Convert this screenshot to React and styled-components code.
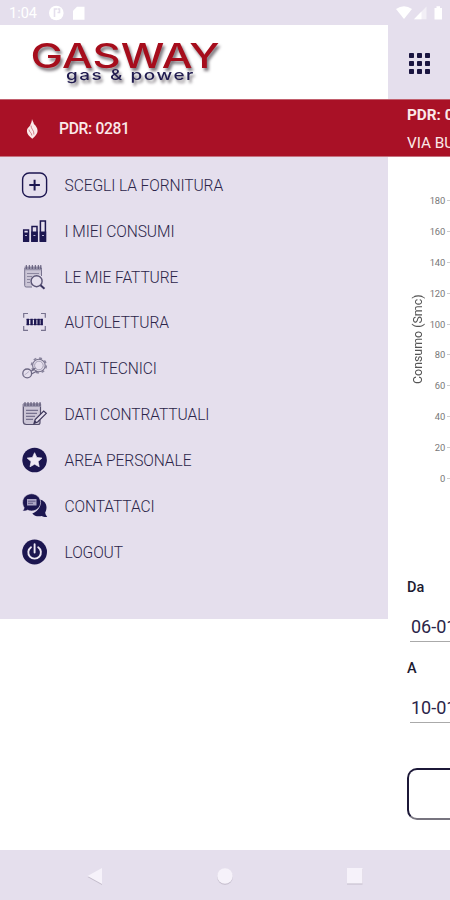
import React from 'react';
import styled, { createGlobalStyle } from 'styled-components';

const GlobalStyle = createGlobalStyle`
    :root {
        --main-red: #a91126;
        --main-lilac: #e5dfed;
        --main-navy: #1c1650;
    }

    * {
        box-sizing: border-box;
    }

    body {
        margin: 0;
        background-color: #fff;
        font-family: Roboto, "Liberation Sans", sans-serif;
    }
`;

const Screen = styled.div`
    display: flex;
    flex-direction: column;
    width: 450px;
    height: 900px;
    overflow: hidden;
    background-color: #fff;
`;

const StatusBar = styled.header`
    display: flex;
    justify-content: space-between;
    flex: 0 0 25px;
    background-color: var(--main-lilac);
    color: #fff;
`;

const StatusLeft = styled.div`
    display: flex;
    align-items: center;
    padding: 2px 0 0 9px;
    font-size: 14.5px;

    span {
        width: 39px;
    }
`;

const Body = styled.main`
    display: flex;
    flex: 1;
    min-height: 0;
`;

const Drawer = styled.aside`
    flex: 0 0 388px;
`;

const LogoBar = styled.div`
    height: 74px;
    background-color: #fff;

    svg {
        display: block;
        filter: drop-shadow(2px 3px 1.5px rgba(40, 30, 40, 0.6));
    }
`;

const RedStrip = styled.div`
    display: flex;
    align-items: center;
    height: 58px;
    padding: 1px 0 0 24px;
    background-color: var(--main-red);
    border-top: 1px solid #c2606e;
    border-bottom: 1px solid #c5727f;
    color: #fbe9e9;
    font-size: 15.6px;
    font-weight: 500;
    letter-spacing: -0.3px;

    svg {
        margin-right: 18px;
    }
`;

const Menu = styled.nav`
    height: 462px;
    padding-top: 5px;
    background-color: var(--main-lilac);
`;

const MenuItem = styled.div`
    display: flex;
    align-items: center;
    height: 45.85px;
    padding-left: 20px;
    color: #2b2549;
    font-size: 15.6px;
    font-weight: 300;

    svg {
        flex: none;
        margin-right: 16.5px;
    }

    span {
        padding-top: 2px;
        letter-spacing: -0.1px;
        white-space: nowrap;
    }
`;

const Page = styled.section`
    flex: 1;
    min-width: 0;
    overflow: hidden;
    white-space: nowrap;
`;

const PageHeader = styled.div`
    height: 74px;
    padding: 27px 0 0 20px;
    background-color: var(--main-lilac);
`;

const PageStrip = styled.div`
    height: 58px;
    padding: 2px 0 0 19px;
    background-color: var(--main-red);
    border-top: 1px solid #c2606e;
    border-bottom: 1px solid #c5727f;
    color: #fbe9e9;
    font-size: 15.3px;
    line-height: 27.5px;

    p {
        margin: 0;
    }

    p:first-child {
        font-weight: 700;
    }
`;

const Chart = styled.div`
    display: flex;
    height: 421px;
    padding-top: 28px;
`;

const AxisTitle = styled.div`
    width: 16px;
    height: 309px;
    margin-left: 22px;
    color: #555;
    font-size: 12.4px;
    line-height: 16px;
    text-align: center;
    writing-mode: vertical-rl;
    transform: rotate(180deg);
`;

const Ticks = styled.div`
    width: 24px;
`;

const Tick = styled.div`
    display: flex;
    align-items: center;
    justify-content: flex-end;
    height: 30.9px;
    color: #777;
    font-size: 9.4px;
    letter-spacing: -0.2px;

    &::after {
        content: "";
        width: 3px;
        height: 1px;
        margin-left: 2px;
        background-color: #ccc;
    }
`;

const Field = styled.div`
    height: 81px;
    padding-left: 19px;
`;

const FieldLabel = styled.div`
    height: 20px;
    color: #1d1a30;
    font-size: 14.5px;
    font-weight: 500;
    line-height: 20px;
`;

const FieldValue = styled.div`
    height: 34px;
    margin: 10px 0 0 3px;
    padding: 6px 0 0 1px;
    border-bottom: 1px solid #aaa;
    color: #2b2549;
    font-size: 18px;
    line-height: 26px;
`;

const OutlineButton = styled.button`
    display: block;
    width: 300px;
    height: 52px;
    margin: 28px 0 0 18.5px;
    background-color: #fff;
    border: 2px solid #1c1838;
    border-bottom-color: #77747f;
    border-radius: 10px;
`;

const NavBar = styled.footer`
    display: grid;
    grid-template-columns: repeat(3, 130px);
    justify-content: center;
    justify-items: center;
    align-items: center;
    flex: 0 0 50px;
    padding-top: 1px;
    background-color: var(--main-lilac);

    svg {
        filter: drop-shadow(0 1px 0.5px rgba(90, 80, 100, 0.25));
    }
`;

const Icon = ({ children, size = 28 }) => (
    <svg width={size} height={size} viewBox="0 0 28 28" fill="none" stroke="#1c1650">
        {children}
    </svg>
);

const PlusIcon = () => (
    <Icon>
        <rect x="2.6" y="2" width="24" height="24" rx="6.5" strokeWidth="1.4" />
        <path d="M14.6 8.8v10.6M9.3 14.1h10.6" strokeWidth="2" />
    </Icon>
);

const BarsIcon = () => (
    <Icon>
        <path d="M3.7 13h4.8v11H3.7zM12 9.5h5v14.5h-5zM20.4 4h5v20h-5z" strokeWidth="1.5" />
        <path d="M3 15.5h6V25H3zM11.2 14.5h6.5V25h-6.5zM19.7 14.5h6.5V25h-6.5z" fill="#1c1650" stroke="none" />
        <path d="M5 18.5h2M13.4 18.5h2M22 18.5h2" stroke="#b7b0cf" />
    </Icon>
);

const InvoiceIcon = () => (
    <Icon>
        <path d="M4.5 5v17.5q0 1.500 1.500 1.500H12V13L21.500 12V5z" fill="#cbc5d6" stroke="none" />
        <path d="M4.700 5v17.5q0 1.500 1.500 1.500H12M21.500 5v8" stroke="#77728e" />
        <path d="M4.500 3.500h17v3.800h-17z" fill="#9893ab" stroke="none" />
        <path d="M6.300 2v4M9.300 2v4M12.300 2v4M15.300 2v4M18.300 2v4M20.800 2v4" stroke="#5c5675" />
        <path d="M7 10.500h12M7 13.500h5M7 16.500h3M7 19.500h3" stroke="#8c87a0" />
        <circle cx="16.600" cy="18.200" r="5.500" fill="#e5dfed" stroke="#5b5576" strokeWidth="1.400" />
        <path d="M20.500 22.200l4 3.600" stroke="#3b3560" strokeWidth="2" />
    </Icon>
);

const ScanIcon = () => (
    <Icon>
        <path d="M8 5.5H3.7v4.3M21 5.5h4.3v4.3M8 22.3H3.7V18M21 22.3h4.3V18" stroke="#77728e" strokeWidth="1.2" />
        <path d="M7.8 10.8v6.5M11.6 10.8v6.5M15.2 10.8v6.5M18.6 10.8v6.5M21.7 10.8v6.5" strokeWidth="2.4" />
        <path d="M6.5 11.5h16M6.5 16.5h16" strokeWidth="0.6" />
    </Icon>
);

const GearIcon = () => (
    <Icon>
        <circle cx="18.900" cy="11.500" r="7.400" stroke="#8a859d" strokeWidth="1.600" strokeDasharray="2.900 2.920" />
        <circle cx="18.900" cy="11.500" r="6.300" stroke="#77728c" strokeWidth="1.100" />
        <circle cx="18.900" cy="11.500" r="4.300" stroke="#9d98ae" strokeWidth="0.900" />
        <path d="M11 17.200l4.500-3.200M11.500 20l5.500-3" stroke="#6d6884" strokeWidth="1.200" />
        <circle cx="7.200" cy="19.400" r="4.400" fill="#e5dfed" stroke="#6d6884" strokeWidth="1.300" />
        <path d="M4.500 21l4.500-3.500" stroke="#aaa5bd" strokeWidth="0.800" />
    </Icon>
);

const ContractIcon = () => (
    <Icon>
        <path d="M3.3 4v17.5q0 3 3 3H18q2 0 2-2V20L20.500 14V4z" fill="#cbc5d6" stroke="none" />
        <path d="M3.3 4v17.5q0 3 3 3H18q2 0 2-2V20M20.5 4v10" stroke="#56506e" strokeWidth="1.2" />
        <path d="M3 3.2h18v3.6H3z" fill="#918ca5" stroke="none" />
        <path d="M5 2v4M8 2v4M11 2v4M14 2v4M17 2v4M20 2v4" stroke="#56506e" />
        <path d="M6 10.3h12M6 13.3h11M6 16.3h9M6 19.3h7" stroke="#777290" strokeWidth="1.2" />
        <path d="M14 23.5l1.2-4 8.5-8.5 2.6 2.3-8.7 8.7z" fill="#e5dfed" stroke="#3c365a" strokeWidth="1.2" />
        <path d="M14 23.5l1-3 2 1.8z" fill="#3c365a" stroke="none" />
    </Icon>
);

const StarIcon = () => (
    <Icon>
        <circle cx="14.6" cy="14" r="12.3" fill="#1c1650" stroke="none" />
        <path
            d="M14.6 6.7l2.2 4.8 5.2.6-3.9 3.5 1.1 5.2-4.6-2.6-4.6 2.6 1.1-5.2-3.9-3.5 5.2-.6z"
            fill="#eee9f4"
            stroke="#eee9f4"
            strokeWidth="0.7"
            strokeLinejoin="round"
        />
    </Icon>
);

const ChatIcon = () => (
    <Icon>
        <path d="M20 7.500c4 1 6.500 4 6.500 7.800 0 2.500-.8 4-1.300 5.300.2 2 1 3 2 4.300-2 .4-4 0-5.300-1-4 1.200-7.500 0-9.600-2.500C18 19.800 21.500 14 20 7.500z" fill="#1c1650" stroke="none" />
        <path
            d="M11.600 1.800c5 0 9 3.800 9 8.600s-4 8.600-9 8.600c-1.500 0-2.800-.3-4-.9-1.300.9-3 1.200-5 .8 1-1 1.500-2 1.500-3.500-1-1.400-1.500-3.200-1.500-5 0-4.800 4-8.600 9-8.600z"
            fill="#1c1650"
            stroke="#e5dfed"
            strokeWidth="0.6"
        />
        <path d="M7 7h9.500v6.500H7z" fill="#aaa4c4" stroke="none" />
        <path d="M8 9.200h7.500M8 11.300h5" stroke="#4b4475" strokeWidth="0.8" />
    </Icon>
);

const PowerIcon = () => (
    <Icon>
        <circle cx="14.6" cy="14" r="12.4" fill="#1c1650" stroke="none" />
        <path d="M11 9.200a6.300 6.300 0 1 0 7.200 0M14.6 6.300v8.200" stroke="#eee9f4" strokeWidth="1.9" strokeLinecap="round" />
    </Icon>
);

const Logo = () => (
    <svg width="388" height="74" viewBox="0 25 388 74" fontFamily="Inter, sans-serif">
        <text x="30.500" y="67.500" fill="#a60d1c" fontSize="33.500" fontWeight="500" textLength="189" lengthAdjust="spacingAndGlyphs">
            GASWAY
        </text>
        <text x="66" y="80" fill="#211c50" fontSize="14.500" fontWeight="500" letterSpacing="1.200" textLength="129" lengthAdjust="spacingAndGlyphs">
            gas &amp; power
        </text>
    </svg>
);

const FlameIcon = () => (
    <svg width="17" height="22" viewBox="0 0 17 22" fill="#fbe9e9">
        <path d="M8 1c.6 2.500 1.700 3.200 1.900 5 1.800 1.600 3.700 4 3.700 7 0 2.500-2.600 5.500-5.300 7.800C5.500 18.500 2.900 16 2.900 13c0-2.600 1.700-3.700 3-5.300C7 5.500 7.900 3.500 8 1z" />
        <path d="M7 7.500c-.2 3.500 3.400 4.800 2.900 9M5 11.500c0 2.500 2.700 3 2.900 6" fill="none" stroke="#c2525f" strokeWidth="0.700" />
    </svg>
);

const menu = [
    { key: 1, text: 'SCEGLI LA FORNITURA', icon: PlusIcon },
    { key: 2, text: 'I MIEI CONSUMI', icon: BarsIcon },
    { key: 3, text: 'LE MIE FATTURE', icon: InvoiceIcon },
    { key: 4, text: 'AUTOLETTURA', icon: ScanIcon },
    { key: 5, text: 'DATI TECNICI', icon: GearIcon },
    { key: 6, text: 'DATI CONTRATTUALI', icon: ContractIcon },
    { key: 7, text: 'AREA PERSONALE', icon: StarIcon },
    { key: 8, text: 'CONTATTACI', icon: ChatIcon },
    { key: 9, text: 'LOGOUT', icon: PowerIcon },
];

const ticks = [180, 160, 140, 120, 100, 80, 60, 40, 20, 0];

const App = () => {
    return (
        <>
            <GlobalStyle />
            <Screen>
                <StatusBar>
                    <StatusLeft>
                        <span>1:04</span>
                        <svg width="40" height="18" viewBox="0 0 40 18" fill="#fff">
                            <circle cx="8.300" cy="8" r="7.300" />
                            <path d="M6.500 12v-8h2.500M9.500 4h2v3.500h-2" fill="none" stroke="#e5dfed" strokeWidth="1.600" />
                            <path d="M29 1.800h7.500v13H25V5.800z" />
                        </svg>
                    </StatusLeft>
                    <svg width="54" height="25" viewBox="396 0 54 25" fill="#fff">
                        <path d="M396 9q8-5.500 16 0l-8 10z" />
                        <path d="M426.500 6.500v12.700h-12.500z" opacity=".5" />
                        <path d="M421.500 11.500v7.700H414z" />
                        <path d="M434.500 8h2V6.300h3.500V8h2v11.500h-7.500z" />
                    </svg>
                </StatusBar>
                <Body>
                    <Drawer>
                        <LogoBar>
                            <Logo />
                        </LogoBar>
                        <RedStrip>
                            <FlameIcon />
                            <span>PDR: 0281</span>
                        </RedStrip>
                        <Menu>
                            {menu.map(({ key, text, icon: ItemIcon }) => (
                                <MenuItem key={key}>
                                    <ItemIcon />
                                    <span>{text}</span>
                                </MenuItem>
                            ))}
                        </Menu>
                    </Drawer>
                    <Page>
                        <PageHeader>
                            <svg width="24" height="24" viewBox="0 0 24 24" fill="#1a1540">
                                {[1, 9, 17].map(y => [1, 9, 17].map(x => <rect key={`${x}-${y}`} x={x} y={y} width="5" height="5" rx="0.800" />))}
                            </svg>
                        </PageHeader>
                        <PageStrip>
                            <p>PDR: 0281</p>
                            <p>VIA BU</p>
                        </PageStrip>
                        <Chart>
                            <AxisTitle>Consumo (Smc)</AxisTitle>
                            <Ticks>
                                {ticks.map(tick => <Tick key={tick}>{tick}</Tick>)}
                            </Ticks>
                        </Chart>
                        <Field>
                            <FieldLabel>Da</FieldLabel>
                            <FieldValue>06-01</FieldValue>
                        </Field>
                        <Field>
                            <FieldLabel>A</FieldLabel>
                            <FieldValue>10-01</FieldValue>
                        </Field>
                        <OutlineButton />
                    </Page>
                </Body>
                <NavBar>
                    <svg width="16" height="18" viewBox="0 0 16 18" fill="#f6f2fa"><path d="M.5 9L15 1v16z" /></svg>
                    <svg width="16" height="16" viewBox="0 0 16 16" fill="#f6f2fa"><circle cx="8" cy="8" r="7.800" /></svg>
                    <svg width="16" height="16" viewBox="0 0 16 16" fill="#f6f2fa"><rect width="15.500" height="15.500" /></svg>
                </NavBar>
            </Screen>
        </>
    );
};

export default App
